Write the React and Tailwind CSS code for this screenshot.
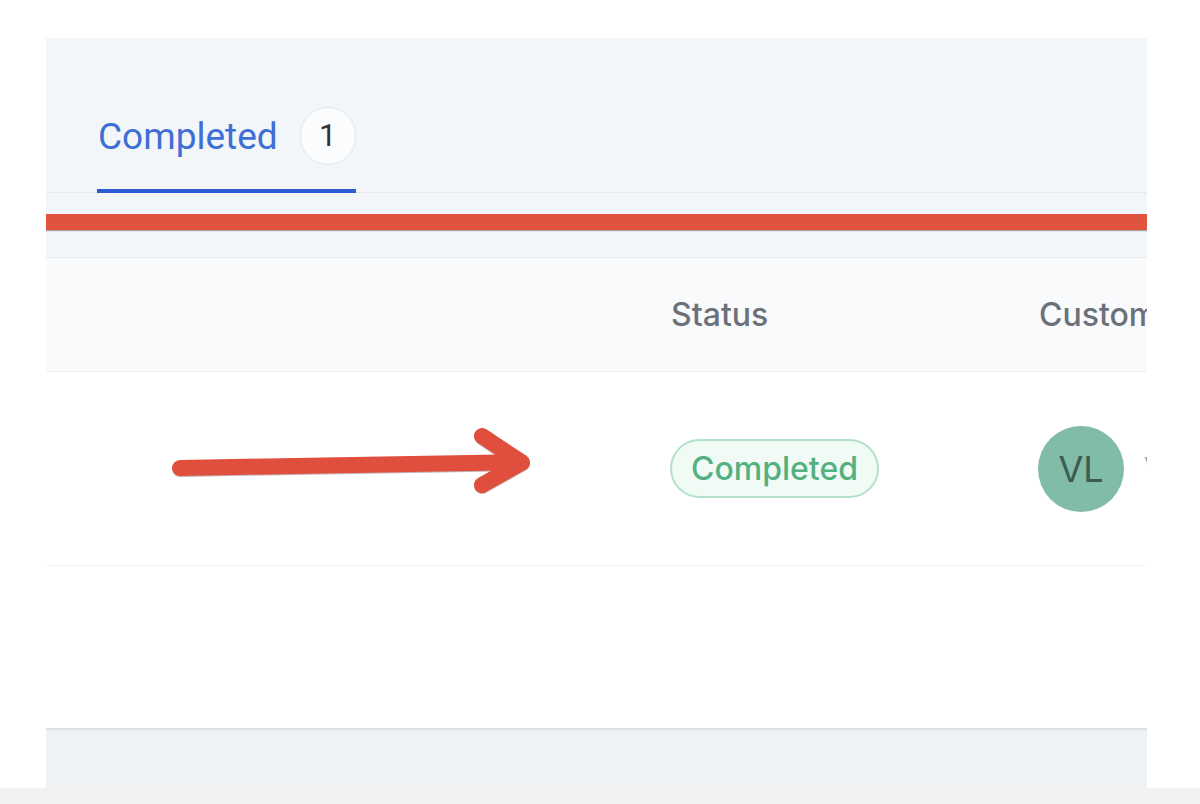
function Arrow() {
    return (
        <svg width="380" height="90" viewBox="0 0 380 90" className="shrink-0">
            <g fill="none" stroke="#e04f3d" strokeWidth="16" strokeLinecap="round" strokeLinejoin="round" style={{ filter: 'drop-shadow(0 1px 0.5px rgba(90,40,40,0.35))' }}>
                <path d="M15 44 L356 38" />
                <path d="M317 12 L357 38.5 L317 61" />
            </g>
        </svg>
    )
}

function App() {
    return (
        <div className="w-[1200px] h-[804px] bg-white flex flex-col overflow-hidden" style={{ fontFamily: 'Roboto, "Liberation Sans", sans-serif' }}>
            <div className="pt-[38px] pl-[46px]">
                <div className="w-[1101px] h-[750px] overflow-hidden flex flex-col bg-white">
                    {/* tabs */}
                    <div className="bg-[#f3f6f9] pt-[69px] border-b border-[#e6eaee] flex">
                        <div className="ml-[51px] flex items-center gap-[22px] pb-[24px] border-b-4 border-[#2e5bd2] -mb-px">
                            <span className="text-[37px] leading-none text-[#3f6ed6] pl-px">Completed</span>
                            <span className="w-[56px] h-[58px] rounded-full bg-[#fbfcfd] border border-[#e4e7ea] flex items-center justify-center text-[31px] text-[#333]">1</span>
                        </div>
                    </div>
                    <div className="bg-[#f3f6f9] pt-[21px] pb-[27px] border-b border-[#e4e8eb]">
                        <div className="h-[16px] bg-[#e0533f] shadow-[0_1px_1px_rgba(80,60,60,0.45)]"></div>
                    </div>
                    {/* table header */}
                    <div className="h-[114px] bg-[#f8fafc] border-b border-[#eceef1] flex items-center" style={{ fontFamily: 'Inter, Roboto, sans-serif' }}>
                        <div className="w-[625px] shrink-0"></div>
                        <div className="w-[368px] shrink-0 text-[32px] font-medium text-[#6b7079]">Status</div>
                        <div className="shrink-0 text-[32px] font-medium text-[#6b7079] whitespace-nowrap">Customer</div>
                    </div>
                    {/* row */}
                    <div className="h-[194px] border-b border-[#f0f2f4] flex items-center" style={{ fontFamily: 'Inter, Roboto, sans-serif' }}>
                        <div className="w-[624px] shrink-0 pl-[119px] flex items-center">
                            <Arrow />
                        </div>
                        <div className="w-[368px] shrink-0">
                            <span className="inline-flex items-center h-[59px] px-[19px] rounded-full border-2 border-[#b2e0c8] bg-[#f0fbf5] text-[32px] font-medium text-[#55b080]">Completed</span>
                        </div>
                        <div className="shrink-0 flex items-center gap-[20px] whitespace-nowrap">
                            <span className="w-[86px] h-[86px] rounded-full bg-[#80bca8] flex items-center justify-center text-[36px] text-[#3d5b52]">VL</span>
                            <span className="text-[30px] text-[#9ca3af]">Vanessa Lee</span>
                        </div>
                    </div>
                    <div className="h-[162px] bg-white"></div>
                    <div className="flex-1 bg-[#eef2f5] border-t-2 border-[#dde1e4]"></div>
                </div>
            </div>
            <div className="flex-1 bg-[#f2f2f2]"></div>
        </div>
    )
}

export default App
